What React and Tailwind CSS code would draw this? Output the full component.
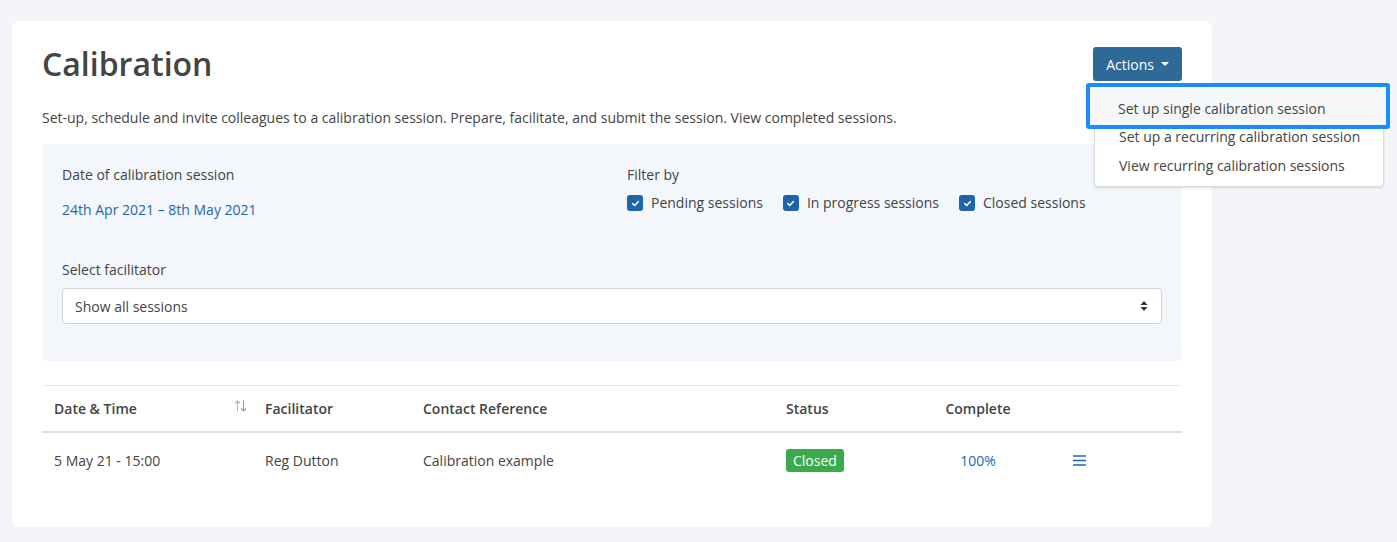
import React from "react";

function Check() {
  return (
    <span className="flex h-4 w-4 items-center justify-center rounded-[3px] bg-[#1f63a8]">
      <svg width="9" height="9" viewBox="0 0 10 10" fill="none">
        <path d="M2 5.2 L4.1 7.2 L8 3" stroke="white" strokeWidth="1.8" strokeLinecap="round" strokeLinejoin="round" />
      </svg>
    </span>
  );
}

export default function App() {
  return (
    <div className="relative min-h-[542px] bg-[#f4f5f9] pt-[21px] pl-3 text-[#444] font-['Open_Sans',sans-serif]">
      <div className="w-[1200px] rounded-lg bg-white px-[30px] pt-[26px] pb-[38px]">
        <div className="flex items-start justify-between">
          <h1 className="mt-[-3px] text-[32px] font-semibold leading-[40px] text-[#444]">Calibration</h1>
          <button className="flex h-[34px] items-center gap-[7px] rounded-[3px] bg-[#2e6a97] px-[13px] text-[14px] text-white">
            Actions
            <span className="h-0 w-0 border-x-[4px] border-t-[4px] border-x-transparent border-t-white" />
          </button>
        </div>
        <p className="mt-[24px] text-[14px] leading-[20px]">
          Set-up, schedule and invite colleagues to a calibration session. Prepare, facilitate, and submit the session. View completed sessions.
        </p>
        <div className="mt-[16px] rounded bg-[#f3f6fa] px-5 pt-[21px] pb-[37px]">
          <div className="grid grid-cols-[565px_1fr]">
            <div>
              <div className="text-[14px] leading-5">Date of calibration session</div>
              <div className="mt-[15px] text-[14px] leading-5 text-[#1d67b0]">24th Apr 2021 – 8th May 2021</div>
            </div>
            <div>
              <div className="text-[14px] leading-5">Filter by</div>
              <div className="mt-2 flex items-center text-[14px] leading-5">
                <Check />
                <span className="ml-2 mr-5">Pending sessions</span>
                <Check />
                <span className="ml-2 mr-5">In progress sessions</span>
                <Check />
                <span className="ml-2">Closed sessions</span>
              </div>
            </div>
          </div>
          <div className="mt-[40px] text-[14px] leading-5">Select facilitator</div>
          <div className="mt-[8px] flex h-9 items-center justify-between rounded border border-[#ced4da] bg-white pl-3 pr-[13px] text-[14px]">
            <span>Show all sessions</span>
            <svg width="8" height="12" viewBox="0 0 8 12">
              <path d="M4 1 L7.5 5 L0.5 5 Z M4 11 L7.5 7 L0.5 7 Z" fill="#333" />
            </svg>
          </div>
        </div>
        <table className="mt-6 w-full border-collapse text-[14px]">
          <thead>
            <tr className="border-t border-b-2 border-t-[#e3e6ea] border-b-[#dfe2e6]">
              <th className="relative h-[46px] w-[211px] pl-3 text-left font-semibold">
                Date &amp; Time
                <svg className="absolute right-[6px] top-[14px]" width="13" height="12" viewBox="0 0 13 12" fill="none">
                  <path d="M3.5 11.5 V1 M1 3.5 L3.5 1 L6 3.5" stroke="#b5b5b5" strokeWidth="1.1" />
                  <path d="M9.5 0.5 V11 M7 8.5 L9.5 11 L12 8.5" stroke="#9a9a9a" strokeWidth="1.1" />
                </svg>
              </th>
              <th className="w-[158px] pl-3 text-left font-semibold">Facilitator</th>
              <th className="w-[363px] pl-3 text-left font-semibold">Contact Reference</th>
              <th className="w-[159px] pl-3 text-left font-semibold">Status</th>
              <th className="w-[90px] text-center font-semibold">Complete</th>
              <th />
            </tr>
          </thead>
          <tbody>
            <tr>
              <td className="h-[57px] pl-3">5 May 21 - 15:00</td>
              <td className="pl-3">Reg Dutton</td>
              <td className="pl-3">Calibration example</td>
              <td className="pl-3">
                <span className="inline-block rounded-[3px] bg-[#3aaa4a] px-[7px] text-[14px] leading-[23px] text-white">Closed</span>
              </td>
              <td className="text-center text-[#1d67b0]">100%</td>
              <td className="pl-[50px]">
                <svg width="13" height="11" viewBox="0 0 13 11">
                  <path d="M0 1 H13 M0 5.5 H13 M0 10 H13" stroke="#1d67b0" strokeWidth="1.4" />
                </svg>
              </td>
            </tr>
          </tbody>
        </table>
      </div>

      <div className="absolute left-[1094px] top-[86px] w-[290px] rounded border border-[#d8dbe0] bg-white py-[6px] text-[14px] shadow-sm">
        <div className="relative h-[29px]">
          <div className="absolute -left-[9px] -right-[7px] -top-[10px] -bottom-[7px] flex items-center rounded-[3px] border-[4px] border-[#1a8cff] bg-[#f6f7f9] pl-[28px] pt-[5px]">
            Set up single calibration session
          </div>
        </div>
        <div className="flex h-[29px] items-center pl-6">Set up a recurring calibration session</div>
        <div className="flex h-[29px] items-center pl-6">View recurring calibration sessions</div>
      </div>
    </div>
  );
}
